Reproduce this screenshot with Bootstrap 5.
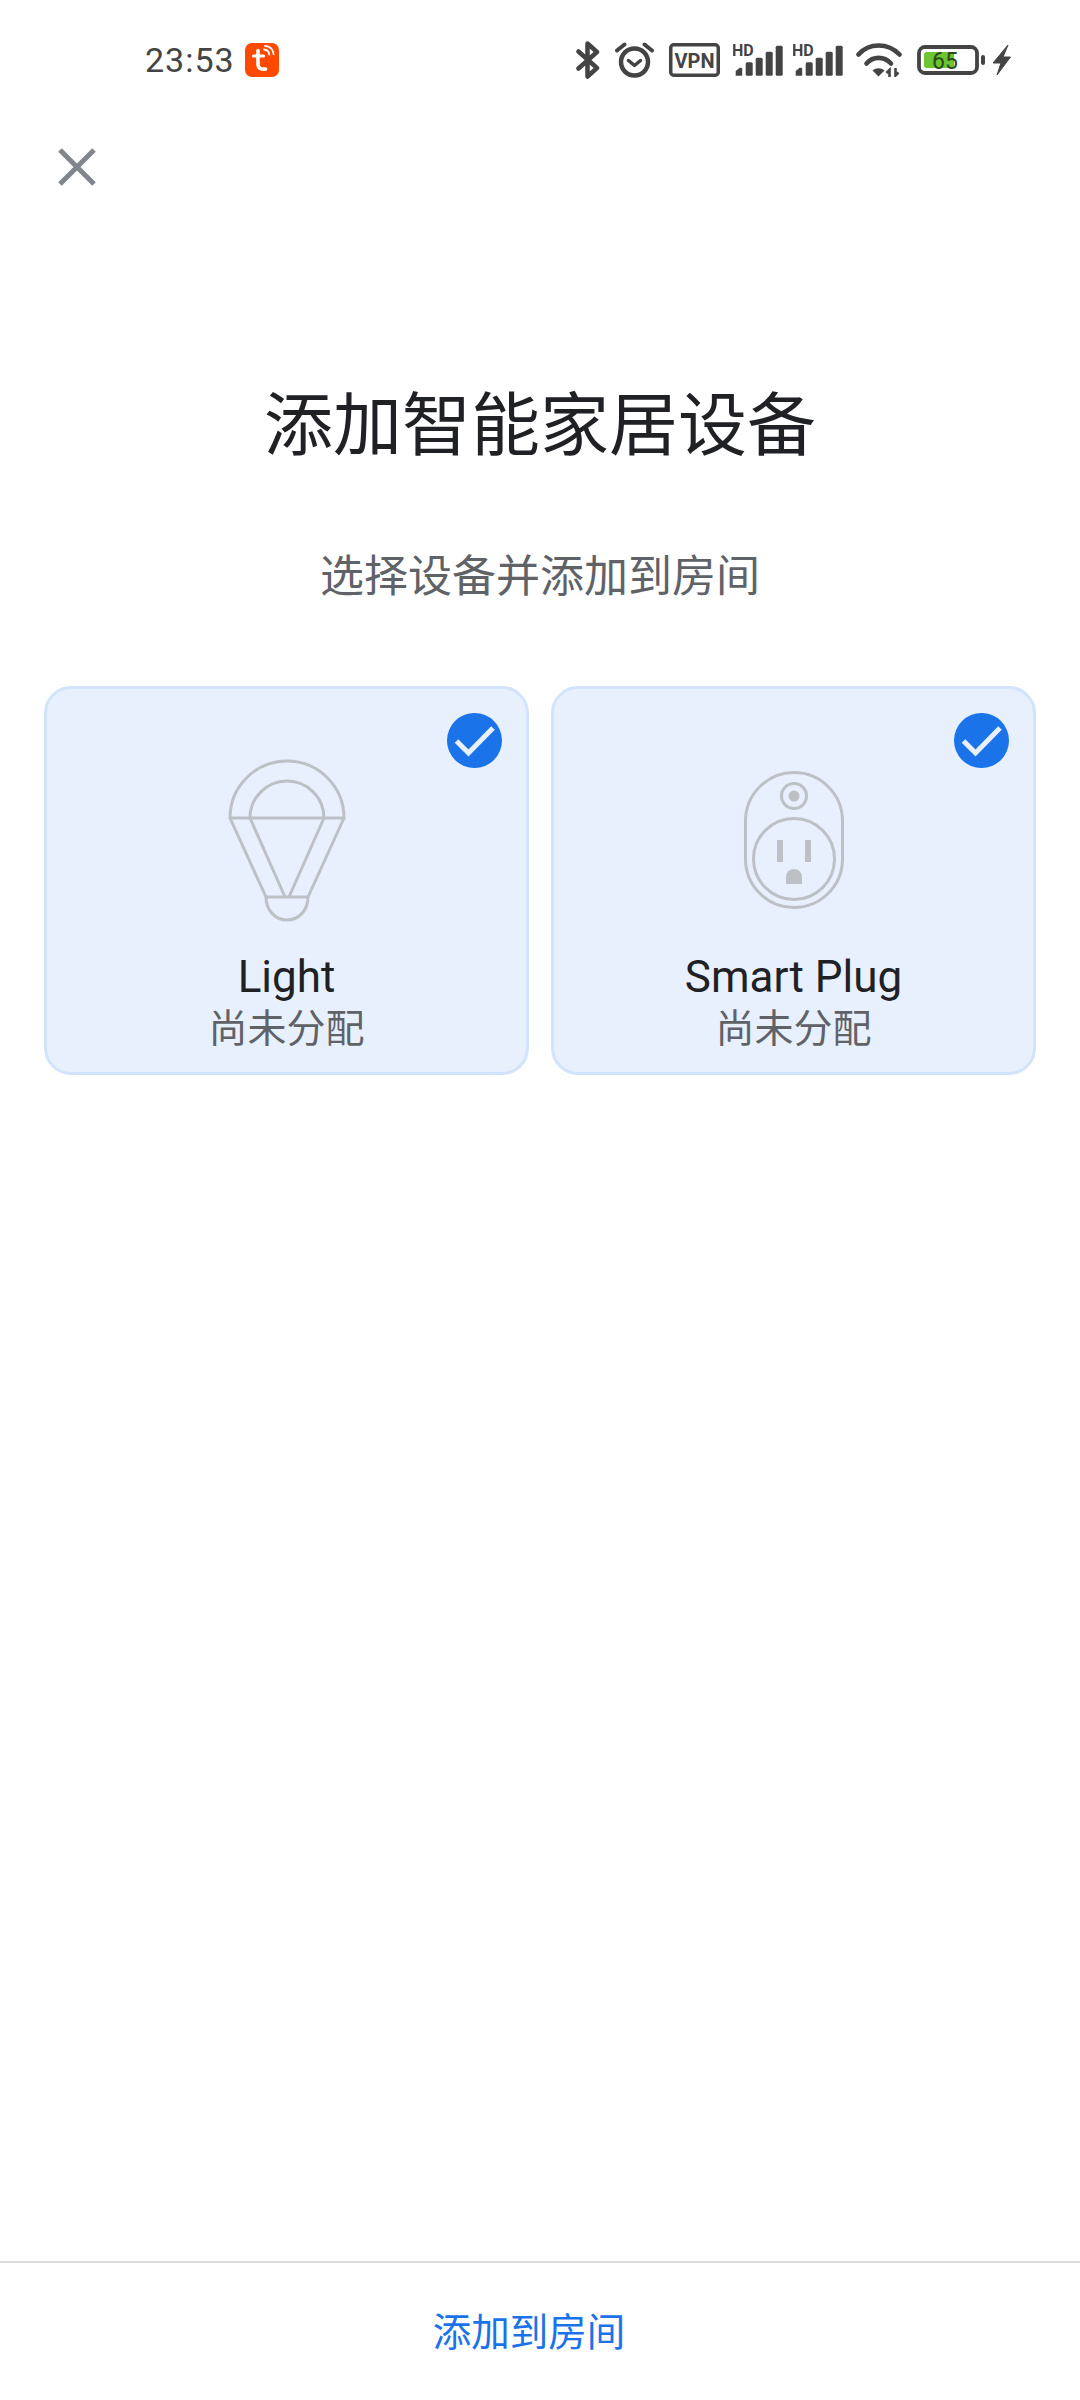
<!DOCTYPE html>
<html lang="zh-CN">
<head>
  <meta charset="UTF-8" />
  <meta name="viewport" content="width=device-width, initial-scale=1" />
  <title>添加智能家居设备</title>
  <link href="https://cdn.jsdelivr.net/npm/bootstrap@5.3.2/dist/css/bootstrap.min.css" rel="stylesheet" />
  <style>
    body {
      background-color: #fff;
      font-family: Roboto, "Noto Sans CJK SC", sans-serif;
      color: #202124;
    }

    .screen {
      width: 1080px;
      min-height: 2400px;
    }

    .status-bar {
      height: 120px;
      padding: 0 69px 0 145px;
    }

    .clock {
      font-size: 34px;
      letter-spacing: 1px;
      color: #444;
      line-height: 1;
    }

    .tuya { margin-left: 10px; }
    .sb-15 { margin-left: 15px; }
    .sb-13 { margin-left: 13px; }
    .sb-10 { margin-left: 10px; }
    .sb-8 { margin-left: 8px; }

    .close-row {
      height: 94px;
      padding-left: 58px;
    }

    .page-title {
      font-size: 69px;
      font-weight: 400;
      line-height: 90px;
      margin: 168px 0 0;
    }

    .page-sub {
      font-size: 44px;
      line-height: 60px;
      color: #5f6368;
      margin: 75px 0 0;
    }

    .device-grid {
      padding: 0 44px;
      margin-top: 79px;
      gap: 22px;
    }

    .device-card {
      width: 485px;
      height: 389px;
      background-color: #e8f0fe;
      border: 3px solid #d2e3fc;
      border-radius: 27px;
    }

    .device-check {
      position: absolute;
      top: 24px;
      right: 24px;
    }

    .device-art {
      height: 263px;
    }

    .art-bulb { margin-top: 70px; }
    .art-plug { margin-top: 82px; }

    .device-name {
      font-size: 44px;
      line-height: 50px;
      color: #202124;
    }

    .device-state {
      font-size: 39px;
      line-height: 50px;
      margin-top: 2px;
      color: #5f6368;
    }

    .art-line {
      fill: none;
      stroke: #bdc1c6;
      stroke-width: 3;
    }

    .art-fill { fill: #bdc1c6; }

    .bottom-bar {
      height: 139px;
      border-top: 2px solid #dadce0;
      padding: 2px 22px 0 0;
    }

    .add-btn {
      font-size: 38.5px;
      line-height: 50px;
      color: #1a73e8;
      padding: 0;
      border: 0;
    }
  </style>
</head>
<body>
  <div class="screen d-flex flex-column">

    <div class="status-bar d-flex align-items-center">
      <span class="clock">23:53</span>
      <svg class="tuya" width="34" height="34" viewBox="0 0 34 34">
        <rect width="34" height="34" rx="7" fill="#ff4800" />
        <path d="M13 7.500V21c0 4 2.500 5.500 7.500 5" fill="none" stroke="#fff" stroke-width="3.600" stroke-linecap="round" />
        <path d="M8.500 13h10" fill="none" stroke="#fff" stroke-width="3.200" stroke-linecap="round" />
        <path d="M19 6.500c3 .3 5 2.300 5.300 5.200M20 2.800c5 .4 8.200 3.700 8.700 8.500" fill="none" stroke="#fff" stroke-width="1.800" stroke-linecap="round" />
      </svg>

      <svg class="ms-auto" width="24" height="38" viewBox="0 0 24 38">
        <path d="M2.500 10.500 21 27 11.500 35.500V2.500L21 11 2.500 27.500" fill="none" stroke="#444" stroke-width="4.500" stroke-linejoin="round" stroke-linecap="round" />
      </svg>
      <svg class="sb-15" width="39" height="36" viewBox="0 0 39 36">
        <circle cx="19.500" cy="20" r="13.500" fill="none" stroke="#444" stroke-width="4.500" />
        <path d="M13.500 18.500 19.500 23.500 25.500 18.500" fill="none" stroke="#444" stroke-width="3.500" stroke-linecap="round" stroke-linejoin="round" />
        <path d="M2 8.500 9.500 2.500M37 8.500 29.500 2.500" fill="none" stroke="#444" stroke-width="4" stroke-linecap="round" />
      </svg>
      <svg class="sb-15" width="51" height="34" viewBox="0 0 51 34">
        <rect x="1.750" y="1.750" width="47.500" height="30.500" rx="3" fill="none" stroke="#444" stroke-width="3.500" />
        <text x="25.500" y="24.500" text-anchor="middle" font-family="Roboto, sans-serif" font-size="20" font-weight="700" fill="#444">VPN</text>
      </svg>
      <svg class="sb-13" width="50" height="38" viewBox="0 -3 50 38">
        <text x="-1" y="11.500" font-family="Roboto, sans-serif" font-size="16" font-weight="700" fill="#444">HD</text>
        <g fill="#444">
          <path d="M2.700 31.700V27l4-3.300h1c1 0 1.500.5 1.500 1.500v6.500z" />
          <rect x="12.700" y="18.300" width="7" height="13.400" rx="1.500" />
          <rect x="22.700" y="13.700" width="7" height="18" rx="1.500" />
          <rect x="32.700" y="7.700" width="7" height="24" rx="1.500" />
          <rect x="42.700" y="1.700" width="7" height="30" rx="1.500" />
        </g>
      </svg>
      <svg class="sb-10" width="50" height="38" viewBox="0 -3 50 38">
        <text x="-1" y="11.500" font-family="Roboto, sans-serif" font-size="16" font-weight="700" fill="#444">HD</text>
        <g fill="#444">
          <path d="M2.700 31.700V27l4-3.300h1c1 0 1.500.5 1.500 1.500v6.500z" />
          <rect x="12.700" y="18.300" width="7" height="13.400" rx="1.500" />
          <rect x="22.700" y="13.700" width="7" height="18" rx="1.500" />
          <rect x="32.700" y="7.700" width="7" height="24" rx="1.500" />
          <rect x="42.700" y="1.700" width="7" height="30" rx="1.500" />
        </g>
      </svg>
      <svg class="sb-13" width="46" height="34" viewBox="0 0 46 34">
        <g fill="none" stroke="#444" stroke-width="4.600" stroke-linecap="round">
          <path d="M2.500 11.500C13 -.5 32 -.5 43.500 11.500" />
          <path d="M10.500 20.500C17 13 28 13 35 20.500" />
        </g>
        <path d="M16.500 27.500C20 24.500 25 24.500 28.500 27.500L22.500 33.500z" fill="#444" />
        <path d="M33.500 34V27l-3 3M39.500 25v7.500l3-3" fill="none" stroke="#444" stroke-width="2.600" />
      </svg>
      <svg class="sb-15" width="68" height="30" viewBox="0 0 68 30">
        <rect x="2" y="2" width="58" height="26" rx="6" fill="none" stroke="#444" stroke-width="3.800" />
        <rect x="7" y="7" width="30" height="16" rx="2.500" fill="#6cc531" />
        <text x="28" y="23.500" text-anchor="middle" font-family="Roboto, sans-serif" font-size="23" fill="#2b4a1a">65</text>
        <rect x="64" y="10" width="4" height="10" rx="2" fill="#444" />
      </svg>
      <svg class="sb-8" width="18" height="30" viewBox="0 0 18 30">
        <path d="M15 0 0 18H8L4 30 17.500 12H10z" fill="#444" stroke="#444" stroke-linejoin="round" />
      </svg>
    </div>

    <div class="close-row d-flex align-items-center">
      <button type="button" class="btn p-0 border-0 d-flex" aria-label="关闭">
        <svg width="38" height="38" viewBox="0 0 38 38">
          <path d="M2 2 36 36M36 2 2 36" fill="none" stroke="#80868b" stroke-width="5" />
        </svg>
      </button>
    </div>

    <h1 class="page-title text-center">添加智能家居设备</h1>
    <p class="page-sub text-center">选择设备并添加到房间</p>

    <div class="device-grid d-flex">
      <div class="card device-card position-relative text-center">
        <svg class="device-check" width="55" height="55" viewBox="0 0 55 55">
          <circle cx="27.500" cy="27.500" r="27.500" fill="#1a73e8" />
          <path d="M9.500 28 21.500 40 46 15" fill="none" stroke="#e8f0fe" stroke-width="5" />
        </svg>
        <div class="device-art d-flex justify-content-center align-items-start">
          <svg class="art-bulb" width="118" height="164" viewBox="0 0 118 164">
            <path class="art-line" d="M2 59a57 57 0 0 1 114 0zM22 59a37 37 0 0 1 74 0" />
            <path class="art-line" d="M2 59 38 138M116 59 80 138M22 59 57 138M96 59 61 138" />
            <path class="art-line" d="M38 138H80M38 138c0 13 9 23 21 23s21-10 21-23" />
          </svg>
        </div>
        <div class="device-name">Light</div>
        <div class="device-state">尚未分配</div>
      </div>

      <div class="card device-card position-relative text-center">
        <svg class="device-check" width="55" height="55" viewBox="0 0 55 55">
          <circle cx="27.500" cy="27.500" r="27.500" fill="#1a73e8" />
          <path d="M9.500 28 21.500 40 46 15" fill="none" stroke="#e8f0fe" stroke-width="5" />
        </svg>
        <div class="device-art d-flex justify-content-center align-items-start">
          <svg class="art-plug" width="100" height="138" viewBox="0 0 100 138">
            <rect class="art-line" x="1.500" y="1.500" width="97" height="135" rx="48.500" />
            <circle class="art-line" cx="50" cy="25" r="12.500" />
            <circle class="art-fill" cx="50" cy="25" r="5.500" />
            <circle class="art-line" cx="50" cy="88" r="40.500" />
            <rect class="art-fill" x="33" y="69" width="6" height="22" />
            <rect class="art-fill" x="61" y="69" width="6" height="22" />
            <path class="art-fill" d="M42 113V106a8 8 0 0 1 16 0v7z" />
          </svg>
        </div>
        <div class="device-name">Smart Plug</div>
        <div class="device-state">尚未分配</div>
      </div>
    </div>

    <div class="bottom-bar mt-auto d-flex align-items-center justify-content-center">
      <button type="button" class="btn add-btn">添加到房间</button>
    </div>
  </div>

  <script src="https://cdn.jsdelivr.net/npm/bootstrap@5.3.2/dist/js/bootstrap.bundle.min.js"></script>
</body>
</html>
